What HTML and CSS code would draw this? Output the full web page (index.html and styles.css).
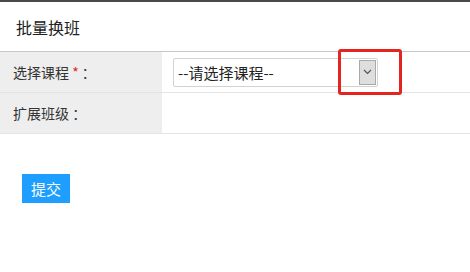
FILE: index.html
```html
<!DOCTYPE html>
<html lang="zh">
<head>
<meta charset="utf-8">
<link rel="stylesheet" href="styles.css">
</head>
<body>
<div class="page">
  <div class="header">批量换班</div>
  <div class="form">
    <div class="row">
      <div class="label">选择课程 <span class="req">*</span> ：</div>
      <div class="field">
        <div class="select">
          <span class="select-text">--请选择课程--</span>
          <span class="select-btn">
            <svg width="9" height="6" viewBox="0 0 9 6"><path d="M1 1 L4.5 4.5 L8 1" fill="none" stroke="#555" stroke-width="1.2"/></svg>
          </span>
        </div>
      </div>
    </div>
    <div class="row">
      <div class="label">扩展班级 ：</div>
      <div class="field"></div>
    </div>
  </div>
  <div class="actions">
    <button class="btn">提交</button>
  </div>
  <div class="highlight"></div>
</div>
</body>
</html>
```
FILE: styles.css
```css
html, body {
  margin: 0;
  padding: 0;
  background: #fff;
}
body {
  font-family: "Noto Sans CJK SC", "Noto Sans", sans-serif;
  color: #333;
}
.page {
  position: relative;
  width: 470px;
  height: 272px;
  border-top: 2px solid #4a4a4a;
  box-sizing: border-box;
}
.header {
  height: 49px;
  padding-left: 16px;
  font-size: 16px;
  line-height: 50px;
  color: #222;
  border-bottom: 1px solid #c8c8c8;
}
.row {
  display: flex;
  height: 40px;
  border-bottom: 1px solid #e4e4e4;
}
.label {
  width: 149px;
  padding-left: 13px;
  background: #eeeeee;
  font-size: 14px;
  line-height: 40px;
  color: #333;
}
.req {
  color: #e0242b;
}
.field {
  flex: 1;
  display: flex;
  align-items: center;
  padding-left: 11px;
}
.select {
  width: 205px;
  height: 29px;
  box-sizing: border-box;
  border: 1px solid #d2d2d2;
  border-radius: 2px;
  display: flex;
  align-items: center;
  justify-content: space-between;
  padding: 0 0 0 4px;
}
.select-text {
  font-size: 15px;
  color: #222;
}
.select-btn {
  width: 17px;
  height: 25px;
  box-sizing: border-box;
  background: #dedede;
  border: 1px solid #a9a9a9;
  margin-right: 1px;
  display: flex;
  align-items: center;
  justify-content: center;
}
.actions {
  padding: 40px 0 0 22px;
}
.btn {
  width: 48px;
  height: 29px;
  border: none;
  background: #1e9fff;
  color: #fff;
  font-family: "Noto Sans CJK SC", sans-serif;
  font-size: 15px;
  padding: 0;
}
.highlight {
  position: absolute;
  left: 338px;
  top: 47px;
  width: 64px;
  height: 46px;
  box-sizing: border-box;
  border: 3px solid #e3241f;
  border-radius: 3px;
}
```
